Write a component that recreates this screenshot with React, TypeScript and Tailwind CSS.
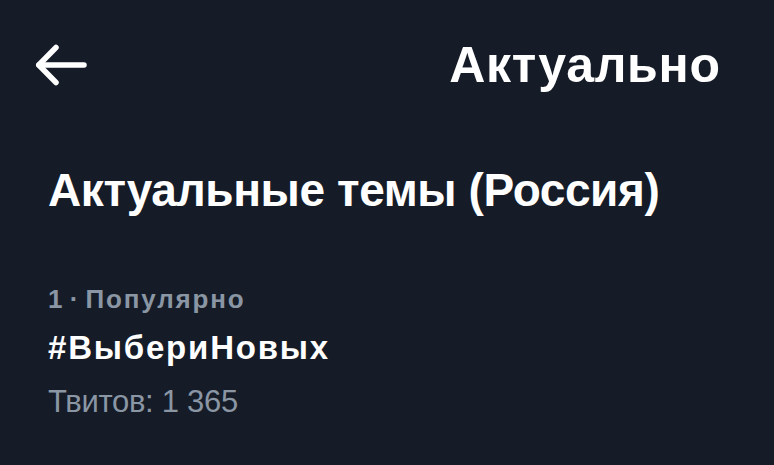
function BackArrow() {
  return (
    <svg width="56" height="44" viewBox="0 0 56 44" fill="none" stroke="currentColor" strokeWidth="5.5" strokeLinecap="round" strokeLinejoin="round">
      <path d="M23 4.5 5.75 22 23 39.5" />
      <path d="M6 22h45" />
    </svg>
  );
}

export default function App() {
  return (
    <div className="w-[774px] h-[465px] overflow-hidden bg-[#151c28] text-white font-['Liberation_Sans',Arial,sans-serif]">
      <header className="mt-[40px] h-[50px] flex items-center justify-between pl-[33px] pr-[54px]">
        <BackArrow />
        <h1 className="text-[50px] font-bold leading-none tracking-[0.7px] -mr-[0.7px]">Актуально</h1>
      </header>
      <section className="px-[48px]">
        <h2 className="mt-[77px] text-[46px] font-bold leading-none tracking-[-0.4px]">Актуальные темы (Россия)</h2>
        <div className="mt-[73px] text-[26px] font-bold text-[#8a96a3] leading-none">
          1 · <span className="tracking-[1.8px]">Популярно</span>
        </div>
        <div className="mt-[19px] text-[33px] font-bold leading-none tracking-[1.8px]">#ВыбериНовых</div>
        <div className="mt-[22px] text-[31px] text-[#8a96a3] leading-none tracking-[-0.3px]">Твитов: 1 365</div>
      </section>
    </div>
  );
}
